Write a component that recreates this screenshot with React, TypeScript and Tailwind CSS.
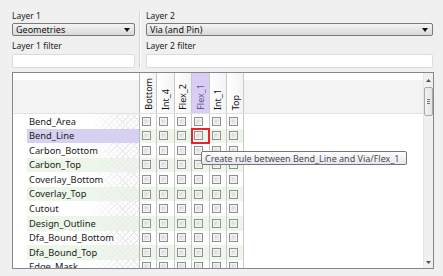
import React from 'react';

const layers = [
  'Bend_Area',
  'Bend_Line',
  'Carbon_Bottom',
  'Carbon_Top',
  'Coverlay_Bottom',
  'Coverlay_Top',
  'Cutout',
  'Design_Outline',
  'Dfa_Bound_Bottom',
  'Dfa_Bound_Top',
  'Edge_Mask',
];

const columns = ['Bottom', 'Int_4', 'Flex_2', 'Flex_1', 'Int_1', 'Top'];

const font = { fontFamily: '"Noto Sans", "DejaVu Sans", sans-serif' };

const Check: React.FC = () => (
  <span className="block w-[9px] h-[9px] border border-[#8e8f8f] bg-[#f4f4f4] p-[1px]">
    <span className="block w-full h-full bg-[linear-gradient(135deg,#cfcfcf,#f4f4f4)] border border-[#e8e8e8]" />
  </span>
);

const Combo: React.FC<{ value: string }> = ({ value }) => (
  <div className="h-[13px] flex items-center justify-between rounded-[2px] border border-[#7a7a7a] bg-[linear-gradient(to_bottom,#f4f4f4,#e6e6e6_50%,#d9d9d9)] pl-[3px] pr-[4px]">
    <span className="text-[9px] leading-none text-[#111]">{value}</span>
    <svg width="6" height="4" viewBox="0 0 6 4">
      <path d="M0 0h6L3 4z" fill="#111" />
    </svg>
  </div>
);

const Label: React.FC<{ text: string }> = ({ text }) => (
  <div className="h-[12px] flex items-center text-[8.5px] leading-none text-[#222]">{text}</div>
);

const Filter: React.FC = () => (
  <div className="h-[14px] rounded-[2px] border border-[#dcdcdc] bg-white" />
);

export default function App() {
  return (
    <div className="relative w-[443px] h-[276px] bg-[#f0f0f0] pl-[12px] pt-[10px] overflow-hidden" style={font}>
      {/* layer pickers */}
      <div className="flex">
        <div className="w-[123px]">
          <Label text="Layer 1" />
          <div className="mt-[1px]">
            <Combo value="Geometries" />
          </div>
          <div className="mt-[4px]">
            <Label text="Layer 1 filter" />
          </div>
          <div className="mt-[2px]">
            <Filter />
          </div>
        </div>
        <div className="ml-[4px] w-[2px] border-l border-[#d5d5d5] border-r border-r-white" />
        <div className="ml-[5px] w-[287px]">
          <Label text="Layer 2" />
          <div className="mt-[1px]">
            <Combo value="Via (and Pin)" />
          </div>
          <div className="mt-[4px]">
            <Label text="Layer 2 filter" />
          </div>
          <div className="mt-[2px]">
            <Filter />
          </div>
        </div>
      </div>

      {/* rule grid */}
      <div className="mt-[4px] w-[422px] h-[197px] border border-[#828790] bg-white flex overflow-hidden">
        <div className="flex-1 flex flex-col">
          <div className="h-[41px] flex border-b border-[#e2e2e2] shrink-0">
            <div className="w-[127px] border-r border-[#b9b9b9] bg-[linear-gradient(to_bottom,#fff_7px,#f3f3f3_7px)]" />
            {columns.map((c) => (
              <div
                key={c}
                className={
                  c === 'Flex_1'
                    ? 'w-[17.4px] border-r border-[#c9c9c9] bg-[#d9cdf5] flex flex-col justify-end items-center pb-[3px]'
                    : 'w-[17.4px] border-r border-[#c9c9c9] bg-[linear-gradient(to_right,#fff,#f4f4f4)] flex flex-col justify-end items-center pb-[3px]'
                }
              >
                <span
                  className={
                    c === 'Flex_1'
                      ? '[writing-mode:vertical-rl] rotate-180 text-[9px] leading-none text-[#5c5c78]'
                      : '[writing-mode:vertical-rl] rotate-180 text-[9px] leading-none text-[#111]'
                  }
                >
                  {c}
                </span>
              </div>
            ))}
            <div className="flex-1 bg-[linear-gradient(to_bottom,#fff_7px,#f3f3f3_7px)]" />
          </div>

          {layers.map((l, i) => {
            const green = i % 2 === 1;
            const selected = l === 'Bend_Line';
            return (
              <div key={l} className="h-[14.57px] flex shrink-0">
                <div className="w-[127px] border-r border-[#b9b9b9] flex">
                  <div className="w-[14px] bg-white" />
                  <div
                    className={
                      selected
                        ? 'flex-1 flex items-center pl-[2px] text-[9.3px] leading-none text-[#1a1a1a] bg-[#d6d1f0]'
                        : green
                        ? 'flex-1 flex items-center pl-[2px] text-[9.3px] leading-none text-[#1a1a1a] bg-[#ecf7ea] bg-[linear-gradient(to_right,#ecf7ea_55%,transparent_85%),repeating-linear-gradient(45deg,#ececec_0_1px,transparent_1px_4px),repeating-linear-gradient(-45deg,#ececec_0_1px,transparent_1px_4px)]'
                        : 'flex-1 flex items-center pl-[2px] text-[9.3px] leading-none text-[#1a1a1a] bg-white bg-[linear-gradient(to_right,#fff_55%,transparent_85%),repeating-linear-gradient(45deg,#ececec_0_1px,transparent_1px_4px),repeating-linear-gradient(-45deg,#ececec_0_1px,transparent_1px_4px)]'
                    }
                  >
                    {l}
                  </div>
                </div>
                {columns.map((c) => (
                  <div
                    key={c}
                    className={
                      green
                        ? 'w-[17.4px] border-r border-[#c9c9c9] bg-[#ecf7ea] flex items-center pl-[2px]'
                        : 'w-[17.4px] border-r border-[#c9c9c9] bg-white flex items-center pl-[2px]'
                    }
                  >
                    <Check />
                  </div>
                ))}
                <div className="flex-1 bg-white" />
              </div>
            );
          })}
        </div>

        {/* scrollbar */}
        <div className="w-[10px] bg-[#f0f0f0] border-l border-[#e6e6e6] flex flex-col items-center">
          <div className="h-[14px] flex items-center justify-center">
            <svg width="5" height="3" viewBox="0 0 5 3">
              <path d="M0 3h5L2.5 0z" fill="#555" />
            </svg>
          </div>
          <div className="w-[9px] h-[29px] rounded-[2px] border border-[#a9a9a9] bg-[linear-gradient(to_right,#f3f3f3,#e3e3e3)] flex flex-col items-center justify-center gap-[1px]">
            <span className="w-[3px] h-px bg-[#777]" />
            <span className="w-[3px] h-px bg-[#777]" />
            <span className="w-[3px] h-px bg-[#777]" />
          </div>
          <div className="flex-1" />
          <div className="h-[12px] flex items-center justify-center">
            <svg width="5" height="3" viewBox="0 0 5 3">
              <path d="M0 0h5L2.5 3z" fill="#555" />
            </svg>
          </div>
        </div>
      </div>

      {/* highlighted cell */}
      <div className="absolute left-[191px] top-[128px] w-[19px] h-[16px] border-2 border-[#e3262b]" />

      {/* tooltip */}
      <div className="absolute left-[201px] top-[151px] w-[206px] h-[14px] rounded-[2px] border border-[#767676] bg-[linear-gradient(to_bottom,#ffffff,#e4e5f0)] flex items-center pl-[3px] text-[9px] leading-none text-[#4c4c4c] whitespace-nowrap">
        Create rule between Bend_Line and Via/Flex_1
      </div>
    </div>
  );
}
